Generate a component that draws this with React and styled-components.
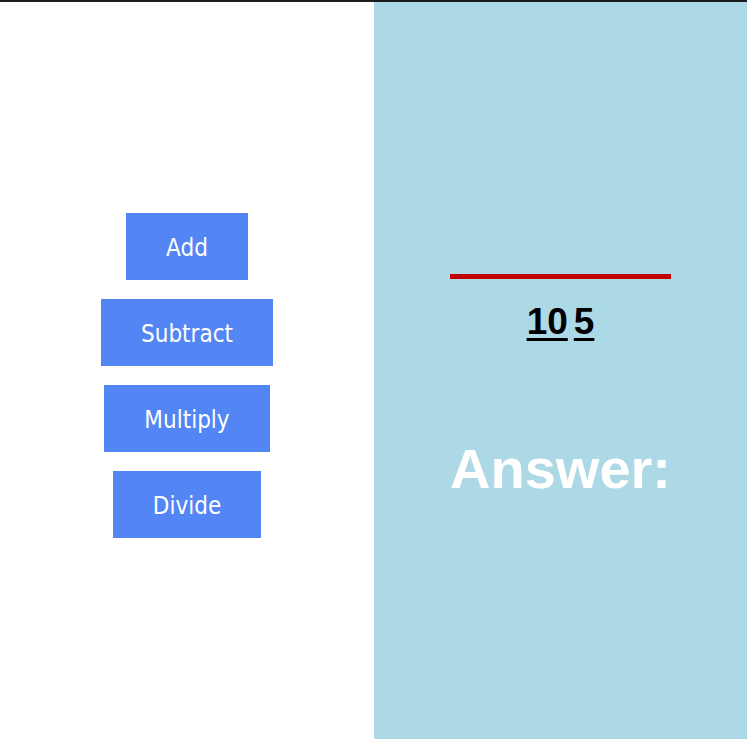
import { createGlobalStyle, styled } from "styled-components";

const GlobalStyle = createGlobalStyle`
  html, body {
    margin: 0;
    padding: 0;
    background: #fff;
  }
`;

function App() {
  return (
    <>
      <GlobalStyle />
      <Wrapper>
        <Left>
          <Button>Add</Button>
          <Button>Subtract</Button>
          <Button>Multiply</Button>
          <Button>Divide</Button>
        </Left>
        <Right>
          <RedLine />
          <Numbers>
            <Num>10</Num>
            <Num>5</Num>
          </Numbers>
          <Answer>Answer:</Answer>
        </Right>
      </Wrapper>
    </>
  );
}

const Wrapper = styled.div`
  display: flex;
  height: 739px;
  box-sizing: border-box;
  border-top: 2px solid #1c1c1c;
`;

const Left = styled.div`
  width: 374px;
  display: flex;
  flex-direction: column;
  align-items: center;
  gap: 19px;
  padding-top: 211px;
  box-sizing: border-box;
  background: #fff;
`;

const Button = styled.button`
  height: 67px;
  padding: 3px 40px 0;
  border: none;
  background: #5385f5;
  color: #fff;
  font-family: "DejaVu Sans Condensed", "DejaVu Sans", sans-serif;
  font-size: 24px;
  cursor: pointer;
`;

const Right = styled.div`
  flex: 1;
  display: flex;
  flex-direction: column;
  align-items: center;
  padding-top: 272px;
  background: #add8e6;
  font-family: "Liberation Sans", Arial, sans-serif;
`;

const RedLine = styled.div`
  width: 221px;
  height: 5px;
  background: #c00000;
`;

const Numbers = styled.div`
  margin-top: 22px;
  display: flex;
  gap: 6px;
  line-height: 42px;
  font-size: 37px;
  font-weight: bold;
  color: #000;
`;

const Num = styled.span`
  text-decoration: underline;
  text-decoration-thickness: 3px;
  text-underline-offset: 4px;
`;

const Answer = styled.div`
  margin-top: 94px;
  font-size: 56px;
  line-height: 64px;
  font-weight: bold;
  color: #fff;
`;

export default App;
